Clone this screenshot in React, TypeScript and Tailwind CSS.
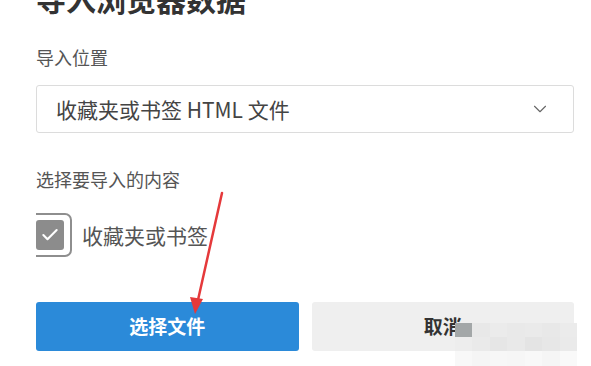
import { Check, ChevronDown } from "lucide-react";

const mosaic = [
  ["#a3a7a8", "#e8e8e8", "#ebebeb", "#e9e9e9", "#eaeaea", "#e8e8e8", "#ebebeb"],
  ["#ededed", "#eaeaea", "#e6e6e6", "#e9e9e9", "#e4e4e4", "#e7e7e7", "#eaeaea"],
  ["#f8f8f8", "#f5f5f5", "#f7f7f7", "#f6f6f6", "#f8f8f8", "#f5f5f5", "#f9f9f9"],
];

const App = () => {
  return (
    <div className="relative w-[591px] h-[366px] overflow-hidden bg-white font-['Noto_Sans_CJK_SC','Noto_Sans',sans-serif]">
      <div className="pl-[36px] pr-[17px]">
        <h1 className="-mt-[17px] text-[30px] leading-[30px] font-bold text-[#333]">导入浏览器数据</h1>

        <div className="mt-[35px] text-[18px] leading-[18px] text-[#555]">导入位置</div>

        <div className="mt-[19px] h-[48px] flex items-center justify-between pl-[19px] pr-[22px] border border-[#dcdcdc] rounded-[3px]">
          <span className="text-[21px] leading-[21px] text-[#444]">收藏夹或书签 HTML 文件</span>
          <ChevronDown className="w-[22px] h-[22px] text-[#666]" strokeWidth={1.2} />
        </div>

        <div className="mt-[37px] text-[18px] leading-[18px] text-[#555]">选择要导入的内容</div>

        <div className="mt-[25px] h-[44px] flex items-center gap-[10px]">
          <div className="relative w-[36px] h-[44px]">
            <div className="absolute inset-0 border-2 border-l-0 border-[#8e8e8e] rounded-r-[7px]" />
            <div className="absolute left-0 top-[7px] w-[28px] h-[30px] bg-[#8c8c8c] rounded-[3px] flex items-center justify-center">
              <Check className="w-[20px] h-[20px] text-white" strokeWidth={2.5} />
            </div>
          </div>
          <span className="text-[21px] leading-[21px] text-[#555]">收藏夹或书签</span>
        </div>

        <div className="mt-[45px] grid grid-cols-2 gap-[13px]">
          <button className="h-[49px] rounded-[3px] bg-[#2b8ad9] text-white text-[19px] font-bold">选择文件</button>
          <button className="h-[49px] rounded-[3px] bg-[#efefef] text-[#333] text-[19px] font-bold">取消</button>
        </div>
      </div>

      <div className="absolute left-[455px] top-[323px] w-[122px] grid grid-cols-7">
        {mosaic.map((row, r) =>
          row.map((c, i) => (
            <div key={`${r}-${i}`} className={r === 2 ? "h-[16px]" : "h-[14px]"} style={{ backgroundColor: c }} />
          ))
        )}
      </div>

      <svg className="absolute inset-0 pointer-events-none" width="591" height="366">
        <line x1="222" y1="193" x2="198" y2="300" stroke="#e5393b" strokeWidth="2.5" strokeLinecap="round" />
        <polygon points="195,314 190,297 203,299" fill="#e5393b" />
      </svg>
    </div>
  );
};

export default App;
